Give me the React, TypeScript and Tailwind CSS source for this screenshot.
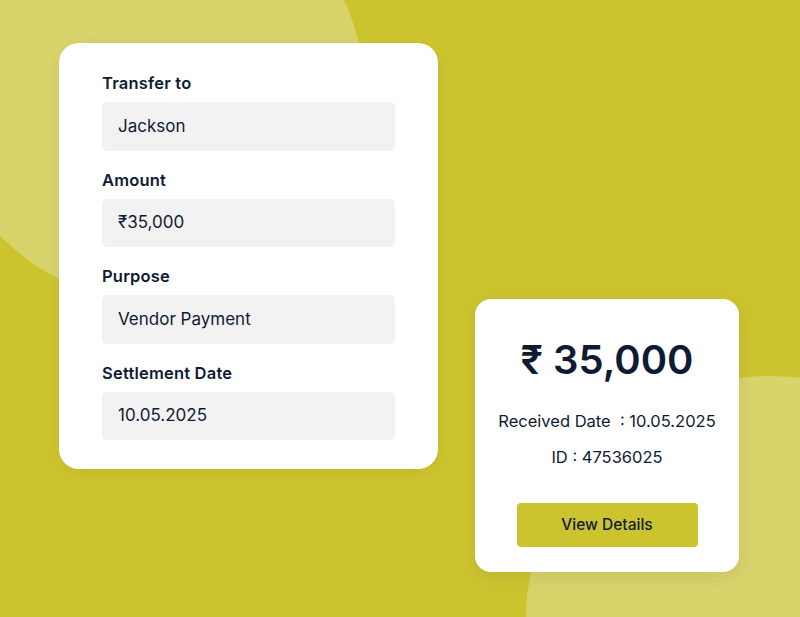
import React from "react";

const fields = [
  { label: "Transfer to", value: "Jackson" },
  { label: "Amount", value: "₹35,000" },
  { label: "Purpose", value: "Vendor Payment" },
  { label: "Settlement Date", value: "10.05.2025" },
];

export default function App() {
  return (
    <div
      className="relative w-[800px] h-[617px] overflow-hidden bg-[#CCC42F] text-[#0F1B33]"
      style={{ fontFamily: "Inter, 'Noto Sans', sans-serif" }}
    >
      <div className="absolute left-[-58px] top-[-121px] w-[422px] h-[422px] rounded-full bg-[#D8D36A]" />
      <div className="absolute left-[526px] top-[376px] w-[488px] h-[488px] rounded-full bg-[#D8D36A]" />

      <div className="relative flex items-start pl-[59px] pt-[43px] gap-[37px]">
        <div className="w-[379px] bg-white rounded-[20px] px-[43px] pt-[29px] pb-[29px] flex flex-col gap-[18px] shadow-[0_4px_16px_rgba(0,0,0,0.06)]">
          {fields.map((f) => (
            <div key={f.label} className="flex flex-col gap-[8px]">
              <div className="text-[16.5px] leading-[22px] font-semibold tracking-[0.2px]">{f.label}</div>
              <div className="h-[48.5px] rounded-[5px] bg-[#F2F2F2] flex items-center pl-[16px] text-[17px] font-normal">
                {f.value}
              </div>
            </div>
          ))}
        </div>

        <div className="mt-[256px] w-[264px] h-[273px] bg-white rounded-[16px] flex flex-col items-center pt-[37px] shadow-[0_4px_20px_rgba(0,0,0,0.08)]">
          <div className="text-[40px] leading-[48px] font-semibold">₹ 35,000</div>
          <div className="mt-[26px] text-[16.5px] leading-[22px] whitespace-pre">Received Date  : 10.05.2025</div>
          <div className="mt-[14px] text-[16.5px] leading-[22px]">ID : 47536025</div>
          <button className="mt-[35px] w-[181px] h-[44px] rounded-[4px] bg-[#CCC42F] text-[15.5px] font-medium text-[#0F1B33]">
            View Details
          </button>
        </div>
      </div>
    </div>
  );
}
